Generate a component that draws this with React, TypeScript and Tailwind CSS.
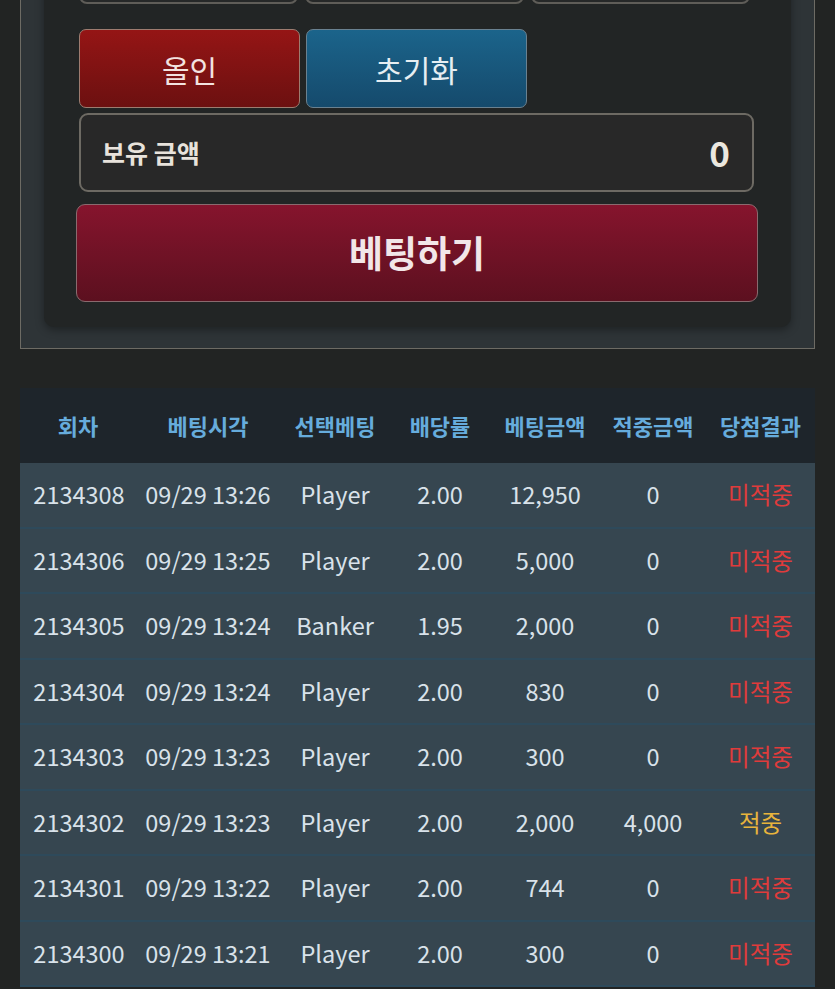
import React from "react";

const rows = [
  ["2134308", "09/29 13:26", "Player", "2.00", "12,950", "0", "미적중"],
  ["2134306", "09/29 13:25", "Player", "2.00", "5,000", "0", "미적중"],
  ["2134305", "09/29 13:24", "Banker", "1.95", "2,000", "0", "미적중"],
  ["2134304", "09/29 13:24", "Player", "2.00", "830", "0", "미적중"],
  ["2134303", "09/29 13:23", "Player", "2.00", "300", "0", "미적중"],
  ["2134302", "09/29 13:23", "Player", "2.00", "2,000", "4,000", "적중"],
  ["2134301", "09/29 13:22", "Player", "2.00", "744", "0", "미적중"],
  ["2134300", "09/29 13:21", "Player", "2.00", "300", "0", "미적중"],
];

const headers = ["회차", "베팅시각", "선택베팅", "배당률", "베팅금액", "적중금액", "당첨결과"];
const cols = "grid grid-cols-[116px_144px_110px_100px_110px_106px_109px]";

export default function App() {
  return (
    <div
      className="w-[835px] h-[989px] overflow-hidden bg-[#222423]"
      style={{ fontFamily: '"Noto Sans CJK KR", "Noto Sans", sans-serif' }}
    >
      <div className="mx-[20px] -mt-[60px] border border-[#6d6b64] bg-[#2e3437] px-[23px] pb-[21px]">
        <div className="rounded-b-[10px] bg-[#222525] px-[35px] pb-[25px] pt-[10px] shadow-[0_3px_8px_rgba(0,0,0,0.35)]">
          <div className="flex gap-[7px]">
            <div className="h-[53px] w-[219px] rounded-lg border-2 border-[#5f5d58] bg-[#262828]" />
            <div className="h-[53px] w-[219px] rounded-lg border-2 border-[#5f5d58] bg-[#262828]" />
            <div className="h-[53px] w-[219px] rounded-lg border-2 border-[#5f5d58] bg-[#262828]" />
          </div>
          <div className="mt-[25px] flex gap-[6px]">
            <div className="flex h-[79px] w-[221px] items-center justify-center rounded-[7px] border border-[#9d7c70] bg-gradient-to-b from-[#951515] to-[#6c1010] pt-[2px] text-[30px] text-[#f3e3e0]">
              올인
            </div>
            <div className="flex h-[79px] w-[221px] items-center justify-center rounded-[7px] border border-[#6a8190] bg-gradient-to-b from-[#1b648b] to-[#154a6c] pt-[2px] text-[30px] text-[#e6eef2]">
              초기화
            </div>
          </div>
          <div className="mt-[5px] flex h-[79px] w-[675px] items-center justify-between rounded-[9px] border-2 border-[#6d6a63] bg-[#282828] pl-[21px] pr-[22px]">
            <span className="text-[25px] font-bold text-[#e8e3dc]">보유 금액</span>
            <span className="text-[35px] font-bold text-[#ebe7df]">0</span>
          </div>
          <div className="-ml-[3px] mt-[12px] flex h-[98px] w-[682px] items-center justify-center rounded-[9px] border border-[#8a6a6e] bg-gradient-to-b from-[#86142d] to-[#5c101f] text-[37px] font-bold text-[#f2e6e8]">
            베팅하기
          </div>
        </div>
      </div>

      <div className="mx-[20px] mt-[39px]">
        <div className={`${cols} h-[75px] items-center bg-[#1e252b]`}>
          {headers.map((h) => (
            <div key={h} className="whitespace-nowrap text-center text-[22px] font-bold text-[#66acdc]">
              {h}
            </div>
          ))}
        </div>
        {rows.map((r, i) => (
          <div
            key={i}
            className={`${cols} h-[65.5px] items-center border-b-2 border-[#2e4a5b] bg-[#364650] text-[23.5px] text-[#d9e2ea]`}
          >
            {r.map((c, j) => (
              <div
                key={j}
                className={`whitespace-nowrap text-center ${
                  j === 6 ? (c === "적중" ? "text-[#e8b43c]" : "text-[#e03b3b]") : ""
                } ${j === 0 ? "pl-[2px]" : ""}`}
              >
                {c}
              </div>
            ))}
          </div>
        ))}
      </div>
    </div>
  );
}
